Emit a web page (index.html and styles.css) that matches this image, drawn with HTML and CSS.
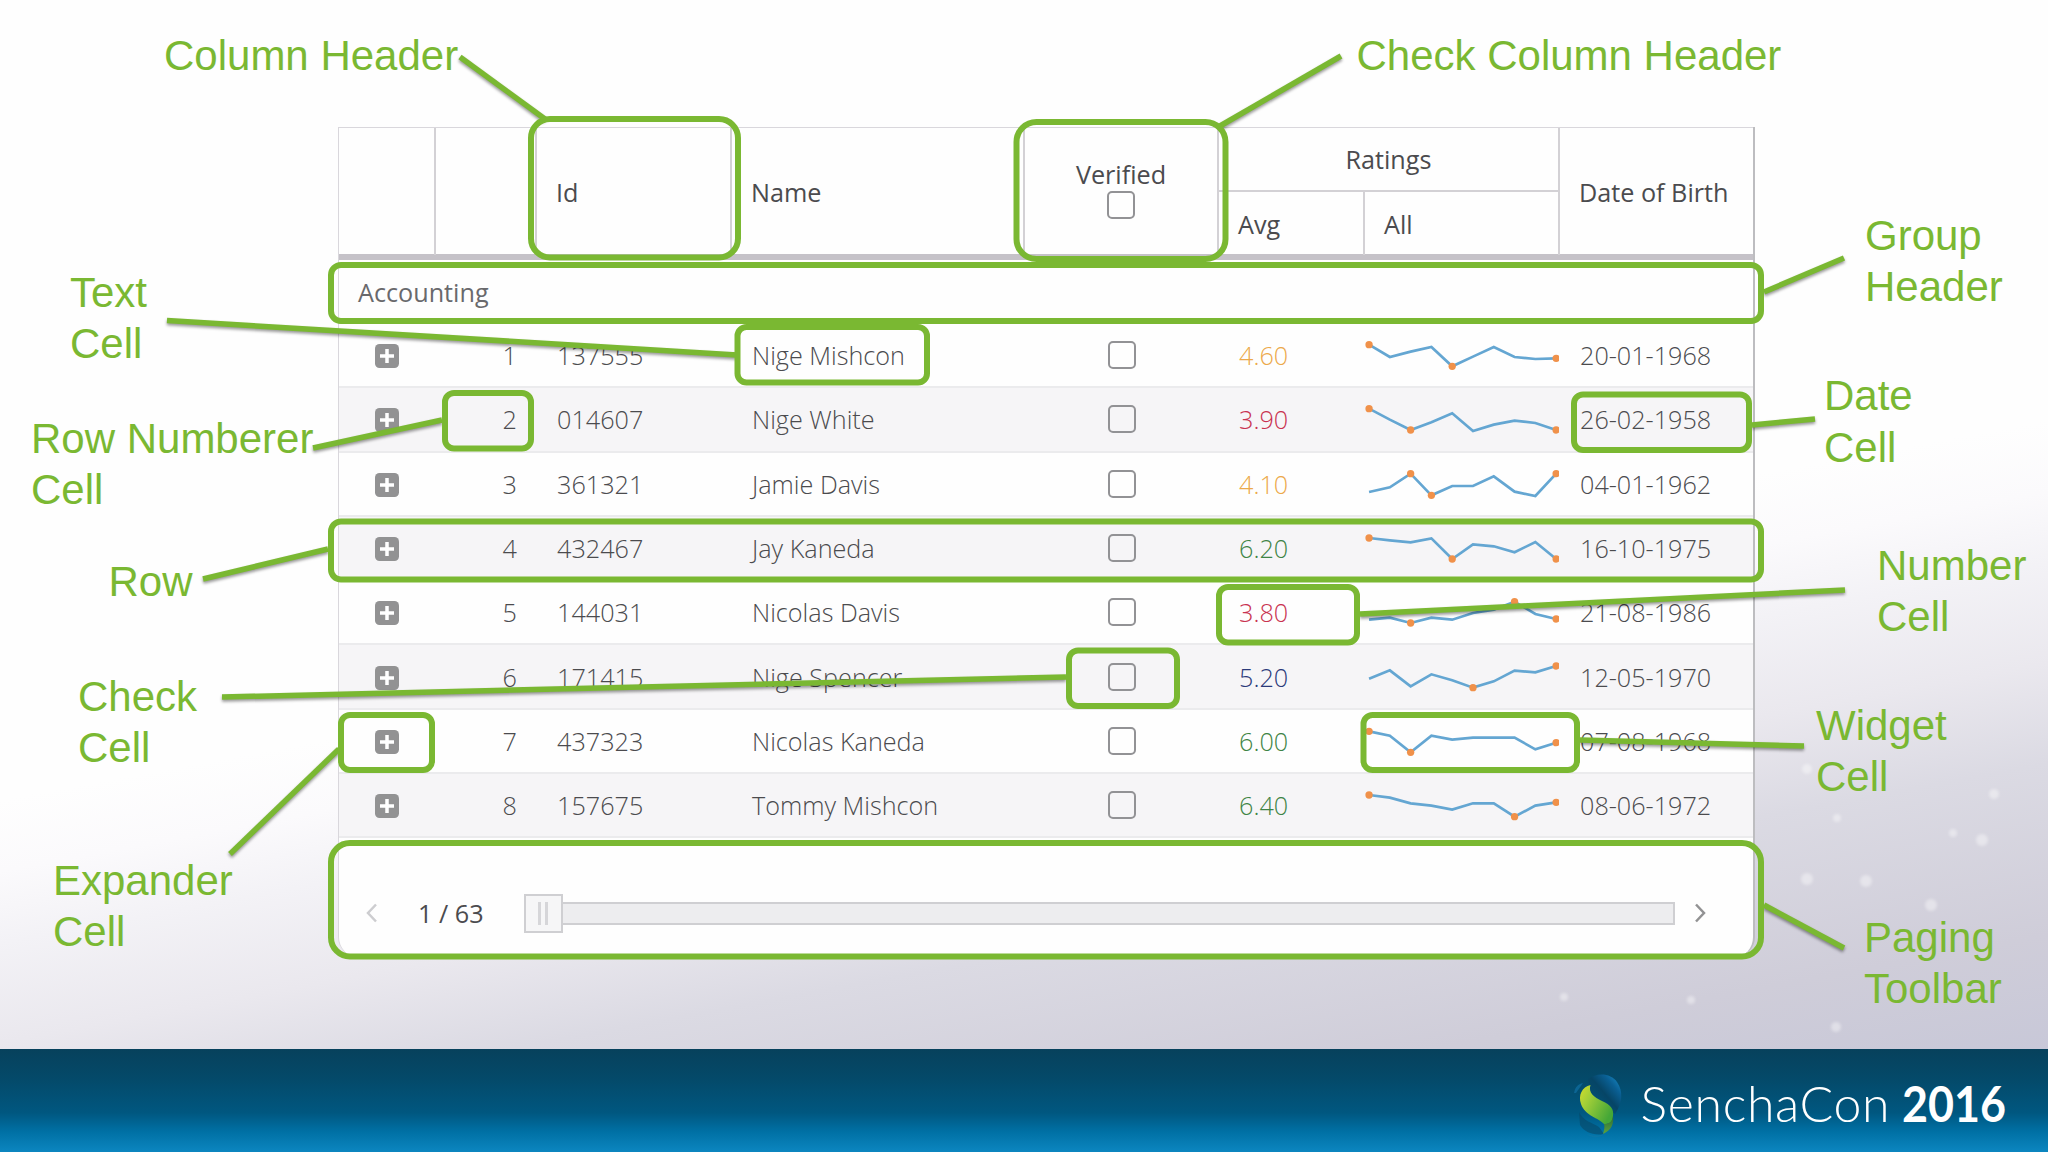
FILE: index.html
```html
<!DOCTYPE html>
<html lang="en">
  <head>
    <meta charset="UTF-8" />
    <meta name="viewport" content="width=device-width, initial-scale=1.0" />
    <title>SenchaCon 2016</title>
    <link rel="stylesheet" href="styles.css">
  </head>
  <body>
    <div class="slide">
      <svg class="sparkles" viewBox="0 0 2048 1049">
        <circle cx="1807" cy="769" r="5" /><circle cx="1994" cy="794" r="5" />
        <circle cx="1837" cy="818" r="4" /><circle cx="1953" cy="833" r="4" />
        <circle cx="1982" cy="840" r="6" /><circle cx="1807" cy="879" r="6" />
        <circle cx="1866" cy="881" r="6" /><circle cx="1931" cy="905" r="6" />
        <circle cx="1564" cy="997" r="4" /><circle cx="1691" cy="1000" r="4" />
        <circle cx="1836" cy="1027" r="5" />
      </svg>

      <main class="content">
        <div class="grid">
          <div class="grid-head">
            <div class="col"></div>
            <div class="col"></div>
            <div class="col">Id</div>
            <div class="col">Name</div>
            <div class="col verified">Verified<span class="check"></span></div>
            <div class="ratings">
              <div class="ratings-title">Ratings</div>
              <div class="col">Avg</div>
              <div class="col">All</div>
            </div>
            <div class="col">Date of Birth</div>
          </div>
          <div class="group">Accounting</div>
          <div id="rows"></div>
          <div class="pager">
            <svg class="arrow off" viewBox="0 0 12 20"><path d="M10 1.500 2 10l8 8.500" /></svg>
            <span class="page">1 / 63</span>
            <div class="slider"><div class="thumb"></div></div>
            <svg class="arrow" viewBox="0 0 12 20"><path d="M2 1.500 10 10l-8 8.500" /></svg>
          </div>
        </div>
      </main>

      <footer class="footer">
        <svg class="logo" viewBox="0 0 460 80">
          <defs>
            <linearGradient id="ball" x1="0.9" y1="0.1" x2="0.25" y2="0.75">
              <stop offset="0" stop-color="#1580ba" />
              <stop offset="0.25" stop-color="#0a5f93" />
              <stop offset="0.6" stop-color="#064566" />
              <stop offset="1" stop-color="#064566" stop-opacity="0" />
            </linearGradient>
            <linearGradient id="leaf" x1="0" y1="0" x2="1" y2="0.6">
              <stop offset="0" stop-color="#d3de2b" />
              <stop offset="0.35" stop-color="#a0ce38" />
              <stop offset="1" stop-color="#45a737" />
            </linearGradient>
            <linearGradient id="tail" x1="0" y1="0" x2="0" y2="1">
              <stop offset="0" stop-color="#2a6a35" />
              <stop offset="1" stop-color="#5da33c" />
            </linearGradient>
          </defs>
          <path fill="url(#ball)" d="M15 9C24 2 38 3 44 12c6 9 6 20-2 32L18 30Z" />
          <path fill="#0c6593" d="M1 23c1-6 4-9 9-10L3 23Z" />
          <path fill="#074768" d="M6 42c4 9 14 11 20 15l5 7c-10 2-20-2-24-9Z" opacity="0.6" />
          <path fill="#0b76a8" d="M14 64c6 2 11 2 17 0-3 4-13 5-17 0Z" />
          <path fill="url(#leaf)" d="M17.500 15C15 23 21 27 29 31c9 4 12 8 11 15 0 6-3 8-9 8C26 48 12 46 8 34 5 25 9 17 17.500 15Z" />
          <path fill="url(#tail)" d="M31 54c5 0 8-2 9-8 1 7-1 14-10 18 1-4 2-7 1-10Z" />
          <text class="logo-name" x="67.500" y="51.500" textLength="249">SenchaCon</text>
          <text class="logo-year" x="329" y="51.500" textLength="104" lengthAdjust="spacingAndGlyphs">2016</text>
        </svg>
      </footer>

      <svg class="callouts" viewBox="0 0 2048 1152">
        <g class="lines">
          <path d="M460 57 545 119" />
          <path d="M1341 56 1220 126" />
          <path d="M1764 292 1844 258" />
          <path d="M167 320.500 737 355" />
          <path d="M313 448 442 420" />
          <path d="M203 579 328 549" />
          <path d="M222 697 1066 677" />
          <path d="M230 854 339 749" />
          <path d="M1764 905 1844 948" />
          <path d="M1360 614 1845 590" />
          <path d="M1580 740 1804 746" />
          <path d="M1752 425 1815 419" />
        </g>
        <g class="boxes">
          <rect x="531" y="119" width="207" height="138.500" rx="19" />
          <rect x="1016.500" y="122" width="209" height="137" rx="20" />
          <rect x="331" y="265" width="1430" height="56" rx="10" />
          <rect x="737.500" y="327" width="189.500" height="55.500" rx="9" />
          <rect x="445" y="393" width="86" height="55.500" rx="9" />
          <rect x="1574" y="394.500" width="175" height="55.500" rx="9" />
          <rect x="331" y="521.500" width="1430" height="58" rx="10" />
          <rect x="1219" y="587" width="138" height="55.500" rx="9" />
          <rect x="1069" y="650.500" width="108" height="55.500" rx="9" />
          <rect x="341" y="715" width="91" height="55" rx="9" />
          <rect x="1363.500" y="715" width="213.500" height="55" rx="9" />
          <rect x="331" y="843" width="1430" height="113.500" rx="19" />
        </g>
        <g class="labels">
          <text x="164" y="70">Column Header</text>
          <text x="1356.500" y="70">Check Column Header</text>
          <text x="1865" y="250">Group<tspan x="1865" dy="51.300">Header</tspan></text>
          <text x="70" y="306.500">Text<tspan x="70" dy="51.300">Cell</tspan></text>
          <text x="31" y="452.500">Row Numberer<tspan x="31" dy="51.300">Cell</tspan></text>
          <text x="108.500" y="596">Row</text>
          <text x="78" y="711">Check<tspan x="78" dy="51.300">Cell</tspan></text>
          <text x="53" y="894.700">Expander<tspan x="53" dy="51.300">Cell</tspan></text>
          <text x="1824" y="410.300">Date<tspan x="1824" dy="51.300">Cell</tspan></text>
          <text x="1877" y="579.700">Number<tspan x="1877" dy="51.300">Cell</tspan></text>
          <text x="1816" y="739.700">Widget<tspan x="1816" dy="51.300">Cell</tspan></text>
          <text x="1864" y="951.700">Paging<tspan x="1864" dy="51.300">Toolbar</tspan></text>
        </g>
      </svg>
    </div>

    <script>
      // dots = indexes of the marked points in line
      var people = [
        { id: "137555", name: "Nige Mishcon", avg: "4.60", color: "orange", date: "20-01-1968", line: [62, 99, 83, 69, 127, 98, 69, 99, 105, 103], dots: [0, 4, 9] },
        { id: "014607", name: "Nige White", avg: "3.90", color: "red", date: "26-02-1958", line: [62, 95, 126, 103, 76, 129, 110, 98, 105, 126], dots: [0, 2, 9] },
        { id: "361321", name: "Jamie Davis", avg: "4.10", color: "orange", date: "04-01-1962", line: [117, 103, 62, 127, 99, 99, 70, 116, 129, 62], dots: [2, 3, 9] },
        { id: "432467", name: "Jay Kaneda", avg: "6.20", color: "green", date: "16-10-1975", line: [63, 70, 76, 64, 126, 82, 88, 106, 75, 126], dots: [0, 4, 9] },
        { id: "144031", name: "Nicolas Davis", avg: "3.80", color: "red", date: "21-08-1986", line: [116, 110, 126, 110, 116, 96, 86, 62, 99, 114], dots: [2, 7, 9] },
        { id: "171415", name: "Nige Spencer", avg: "5.20", color: "blue", date: "12-05-1970", line: [101, 76, 124, 88, 106, 128, 109, 77, 82, 63], dots: [5, 9] },
        { id: "437323", name: "Nicolas Kaneda", avg: "6.00", color: "green", date: "07-08-1968", line: [64, 77, 127, 77, 89, 83, 83, 83, 118, 98], dots: [0, 2, 9] },
        { id: "157675", name: "Tommy Mishcon", avg: "6.40", color: "green", date: "08-06-1972", line: [63, 71, 88, 95, 107, 88, 88, 128, 95, 85], dots: [0, 7, 9] },
      ];

      function spark(line, dots) {
        var points = line.map(function (y, i) {
          return [15 + i * 62.4, y];
        });
        var circles = dots.map(function (i) {
          return `<circle cx="${points[i][0]}" cy="${points[i][1]}" r="11" />`;
        });
        return `<svg class="spark" viewBox="0 0 585 193">
          <polyline points="${points.join(" ")}" />${circles.join("")}</svg>`;
      }

      document.getElementById("rows").innerHTML = people
        .map(function (item, i) {
          return `<div class="row">
            <div class="expander"><svg viewBox="0 0 24 24"><rect width="24" height="24" rx="4.500" /><path d="M12 5v14M5 12h14" /></svg></div>
            <div class="number">${i + 1}</div>
            <div class="cell">${item.id}</div>
            <div class="cell">${item.name}</div>
            <div class="tick"><span class="check"></span></div>
            <div class="cell ${item.color}">${item.avg}</div>
            ${spark(item.line, item.dots)}
            <div class="cell">${item.date}</div>
          </div>`;
        })
        .join("");
    </script>
  </body>
</html>
```
FILE: styles.css
```css
body {
  margin: 0;
  padding: 0;
  font-family: "Open Sans", "Noto Sans", sans-serif;
  font-size: 25.2px;
  color: #4b4b4e;
  overflow: hidden;
}
.slide {
  position: relative;
  display: flex;
  flex-direction: column;
  width: 2048px;
  height: 1152px;
}
.sparkles {
  position: absolute;
  top: 0;
  left: 0;
  width: 2048px;
  height: 1049px;
  fill: rgba(255, 255, 255, 0.4);
  filter: blur(1.5px);
}
.content {
  box-sizing: border-box;
  height: 1049px;
  padding: 127px 293px 0 338px;
  background: linear-gradient(
    169.5deg,
    #fefefe 0%,
    #fefefe 56%,
    #fbfafc 61%,
    #f3f2f6 66%,
    #eae8ee 73%,
    #dbdae3 80%,
    #cfcdd9 92%,
    #c8c8d8 100%
  );
}

/* grid */
.grid {
  box-sizing: border-box;
  height: 830px;
  background: #fefefe;
  border-left: 1px solid #d9d7dc;
  border-right: 2px solid #bdbdc0;
  border-radius: 0 0 20px 20px;
}
.grid-head,
.row {
  display: grid;
  grid-template-columns: 97px 101px 195px 293px 194px 146px 195px 1fr;
}
.grid-head {
  box-sizing: border-box;
  height: 133px;
  border-top: 1px solid #d9d7dc;
  border-bottom: 6px solid #c5c2c8;
}
.col {
  display: flex;
  align-items: center;
  box-sizing: border-box;
  padding-left: 19px;
  border-right: 2px solid #d3d1d5;
}
.grid-head > .col:last-child {
  border-right: 0;
}
.verified {
  flex-direction: column;
  justify-content: center;
  padding: 0 0 8px 0;
  line-height: 34px;
}
.check {
  box-sizing: border-box;
  width: 28px;
  height: 28px;
  border: 2.5px solid #929295;
  border-radius: 5px;
}
.ratings {
  grid-column: span 2;
  display: grid;
  grid-template-columns: 146px 195px;
  grid-template-rows: 64px 63px;
}
.ratings-title {
  grid-column: span 2;
  display: flex;
  align-items: center;
  justify-content: center;
  border-right: 2px solid #d3d1d5;
  border-bottom: 2px solid #d3d1d5;
}
.group {
  display: flex;
  align-items: center;
  box-sizing: border-box;
  height: 64px;
  padding-left: 19px;
  border-bottom: 1px solid #c9c9cc;
  color: #69696c;
}
.row {
  box-sizing: border-box;
  height: 64.3px;
  border-bottom: 2px solid #ebebed;
  align-items: center;
  font-weight: 300;
}
.row:nth-child(even) {
  background: #f6f5f7;
}
.cell,
.number {
  padding-bottom: 2px;
}
.cell {
  padding-left: 20px;
}
.expander {
  display: flex;
  padding-left: 36px;
}
.expander svg {
  width: 24px;
  height: 24px;
  fill: #929293;
  stroke: #fff;
  stroke-width: 3.5;
}
.expander rect {
  stroke: none;
}
.number {
  padding-right: 20px;
  text-align: right;
}
.tick {
  display: flex;
  justify-content: center;
  padding-bottom: 2px;
}
.spark {
  width: 195px;
  height: 64.3px;
  margin-left: -1px;
}
.spark polyline {
  fill: none;
  stroke: #64a6d2;
  stroke-width: 8;
}
.spark circle {
  fill: #f0914a;
}
.orange {
  color: #eca94a;
}
.red {
  color: #c93350;
}
.green {
  color: #3e8445;
}
.blue {
  color: #2b3a7a;
}

/* paging toolbar */
.pager {
  display: flex;
  align-items: center;
  padding: 58px 47px 0 27px;
}
.arrow {
  width: 12px;
  height: 20px;
  fill: none;
  stroke: #929293;
  stroke-width: 2.5;
}
.arrow.off {
  stroke: #cdcdd0;
}
.page {
  width: 106px;
  margin-left: 40px;
}
.slider {
  flex: 1;
  display: flex;
  align-items: center;
  box-sizing: border-box;
  height: 23px;
  margin-right: 19px;
  background: #ededef;
  border: 2px solid #cfcfd2;
}
.thumb {
  box-sizing: border-box;
  width: 39px;
  height: 39px;
  margin-left: -2px;
  border: 2px solid #cfcfd2;
  background:
    linear-gradient(#d6d6d9, #d6d6d9) 12px 6px / 3px 23px no-repeat,
    linear-gradient(#d6d6d9, #d6d6d9) 19px 6px / 3px 23px no-repeat,
    #f6f6f7;
}

/* footer */
.footer {
  display: flex;
  justify-content: flex-end;
  height: 103px;
  background: linear-gradient(
    #07415c 0%,
    #044a6a 30%,
    #005780 62%,
    #0070a4 80%,
    #0c86c0 100%
  );
}
.logo {
  width: 460px;
  height: 80px;
  margin: 21px 15px 0 0;
  fill: #fff;
}
.logo-name {
  font: 300 50px Lato, sans-serif;
}
.logo-year {
  font: 700 49px Lato, sans-serif;
}

/* callouts over the grid */
.callouts {
  position: absolute;
  top: 0;
  left: 0;
  width: 2048px;
  height: 1152px;
}
.lines {
  stroke: #7ab832;
  stroke-width: 5.5;
  filter: drop-shadow(0 2px 1.5px rgba(0, 0, 0, 0.4));
}
.boxes {
  fill: none;
  stroke: #7ab832;
  stroke-width: 6;
}
.labels {
  fill: #7ab832;
  font: 42px "Liberation Sans", Arial, sans-serif;
}
```
